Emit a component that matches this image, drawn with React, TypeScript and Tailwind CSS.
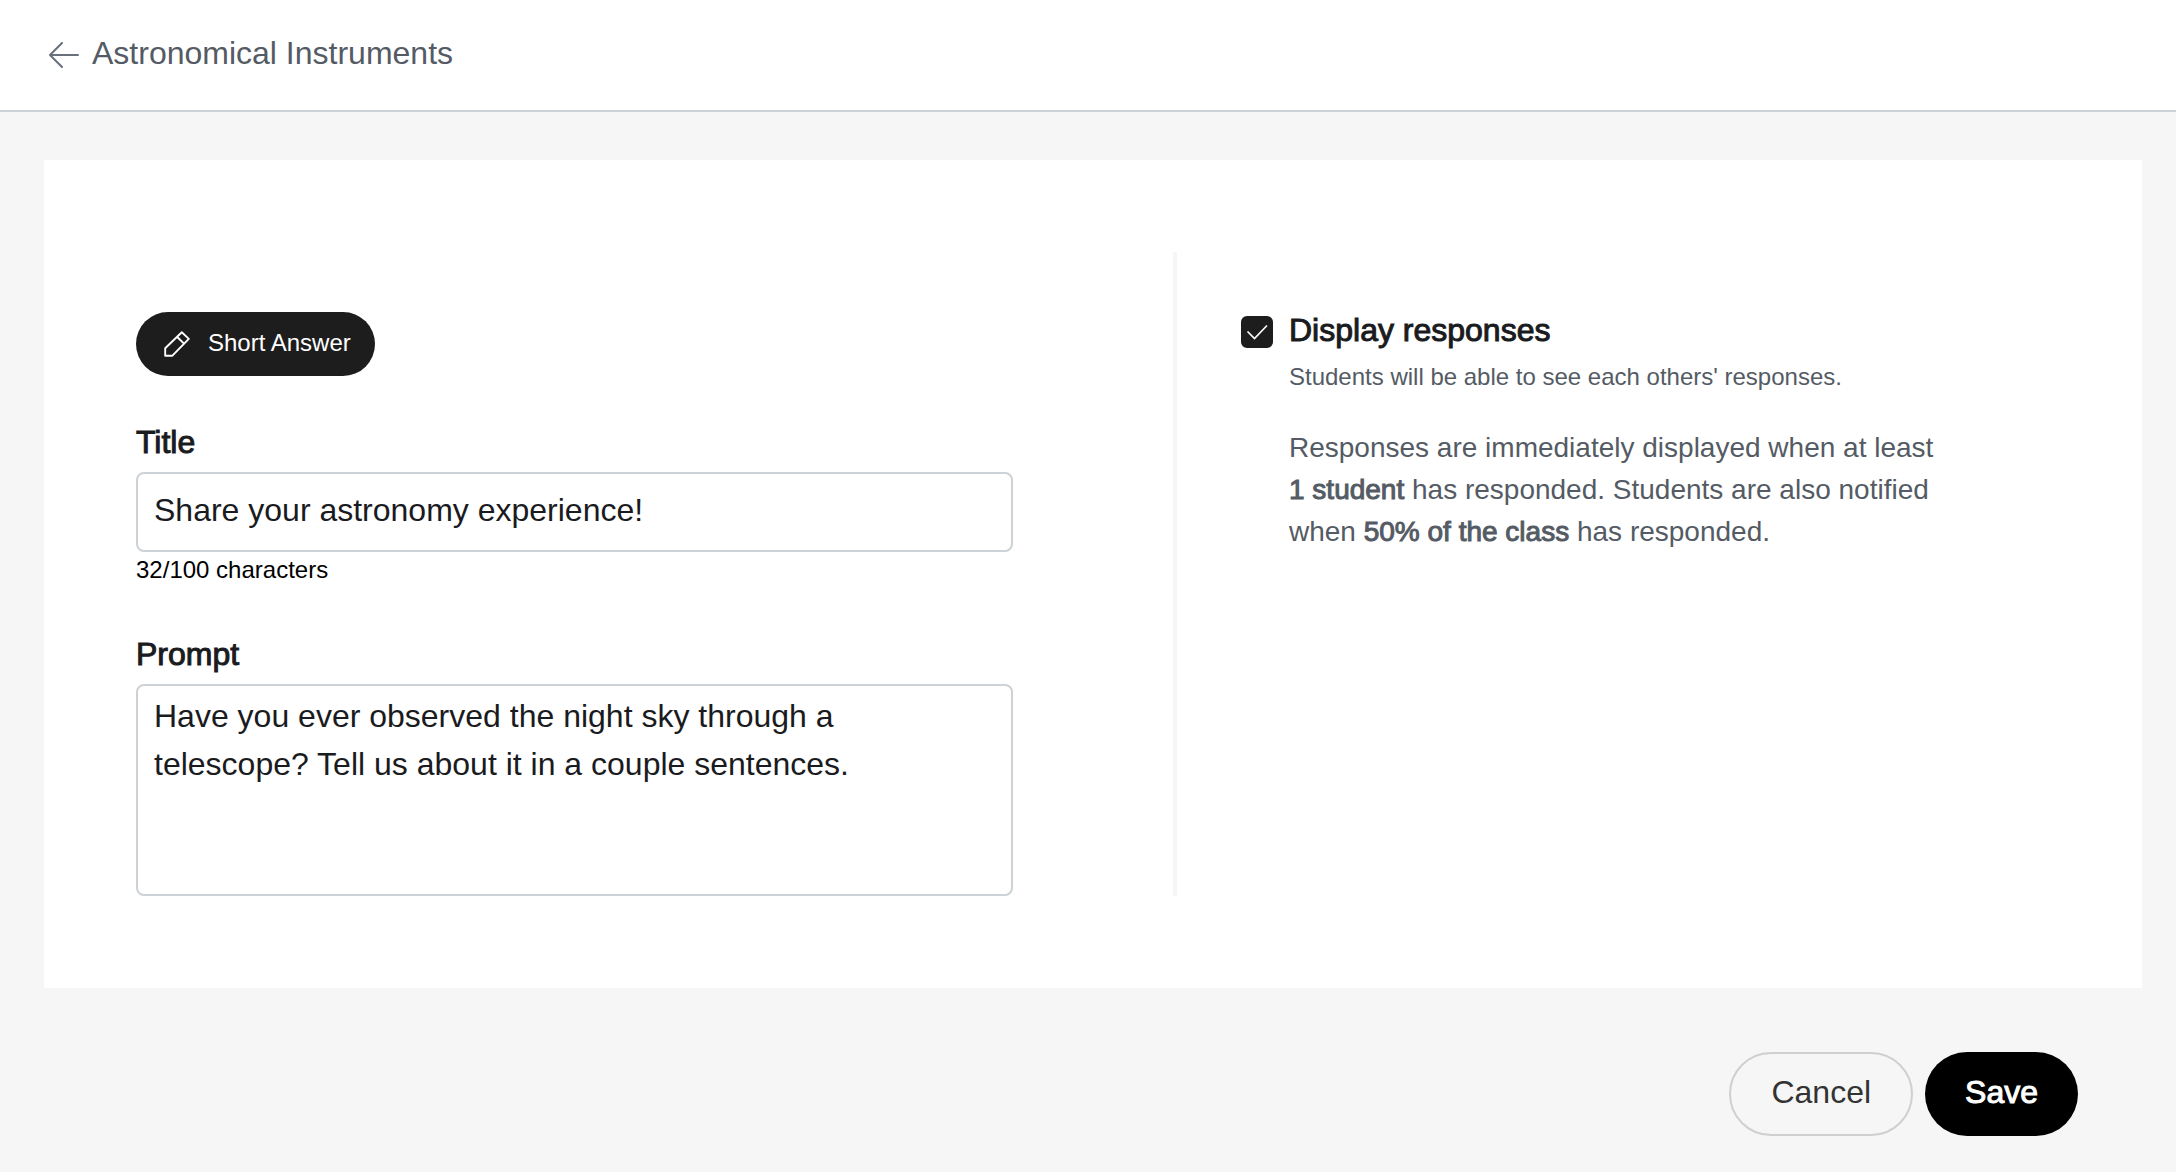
import { useState } from 'react';
import type { ReactNode } from 'react';

const MAX_TITLE_LENGTH = 100;

// Medium weight: sits between the regular and bold faces of the font
function Medium({ children }: { children: ReactNode }) {
  return <strong className="font-normal [-webkit-text-stroke:1px]">{children}</strong>;
}

function ArrowLeftIcon() {
  return (
    <svg width="32" height="26" viewBox="0 0 32 26" fill="none" stroke="#67707c" strokeWidth="2" strokeLinecap="round" strokeLinejoin="round" aria-hidden="true">
      <path d="M14 1 2 13l12 12M2 13h28" />
    </svg>
  );
}

function PencilIcon() {
  return (
    <svg width="26" height="26" viewBox="0 0 26 26" fill="none" stroke="currentColor" strokeWidth="1.9" strokeLinejoin="round" aria-hidden="true">
      <path d="M1.2 17.3 17.8 1.2l7 6.7L8.4 24.7H1.2ZM13 5.8l7 6.8" />
    </svg>
  );
}

export default function App() {
  const [title, setTitle] = useState('Share your astronomy experience!');
  const [prompt, setPrompt] = useState(
    'Have you ever observed the night sky through a telescope? Tell us about it in a couple sentences.'
  );
  const [displayResponses, setDisplayResponses] = useState(true);

  return (
    <div className="min-h-screen bg-[#f6f6f6] text-[#1a1b1e] font-['Liberation_Sans',Arial,sans-serif]">
      <header className="flex h-28 items-center border-b-2 border-[#cdd2d7] bg-white px-12">
        <a href="#" className="flex items-center gap-3 text-[#545b64]">
          <ArrowLeftIcon />
          <h1 className="pb-1 text-[32px] leading-12">Astronomical Instruments</h1>
        </a>
      </header>

      <form onSubmit={(e) => e.preventDefault()}>
        <main className="mt-12 mr-[34px] ml-11 grid grid-cols-[1041fr_873fr] bg-white p-[92px]">
          {/* Question */}
          <section className="border-r-4 border-[#f6f6f6] pt-15 pr-40">
            <div className="inline-flex h-16 items-center gap-[18px] rounded-full bg-[#1d1d1d] pr-6 pl-7 align-top text-white">
              <PencilIcon />
              <span className="pb-0.5 text-2xl">Short Answer</span>
            </div>

            <div className="mt-[42px]">
              <label htmlFor="title" className="mb-1.5 block text-[32px] leading-12">
                <Medium>Title</Medium>
              </label>
              <input
                id="title"
                type="text"
                maxLength={MAX_TITLE_LENGTH}
                value={title}
                onChange={(e) => setTitle(e.target.value)}
                className="block h-20 w-full rounded-lg border-2 border-[#cdd2d7] bg-white px-4 pb-1 text-[32px]"
              />
              <p className="text-2xl leading-9 text-black">
                {title.length}/{MAX_TITLE_LENGTH} characters
              </p>
            </div>

            <div className="mt-[42px]">
              <label htmlFor="prompt" className="mb-1.5 block text-[32px] leading-12">
                <Medium>Prompt</Medium>
              </label>
              <textarea
                id="prompt"
                value={prompt}
                onChange={(e) => setPrompt(e.target.value)}
                className="block h-53 w-full resize-none rounded-lg border-2 border-[#cdd2d7] bg-white px-4 py-1.5 text-[32px] leading-12"
              />
            </div>
          </section>

          {/* Settings */}
          <section className="flex gap-4 pt-[54px] pl-16">
            <span className="mt-2.5 grid size-8 shrink-0">
              <input
                id="display-responses"
                type="checkbox"
                checked={displayResponses}
                onChange={(e) => setDisplayResponses(e.target.checked)}
                className="peer col-start-1 row-start-1 size-8 appearance-none rounded-md border-2 border-[#1d1d1d] checked:bg-[#1d1d1d]"
              />
              <svg viewBox="0 0 32 32" fill="none" stroke="white" strokeWidth="1.7" className="pointer-events-none invisible col-start-1 row-start-1 size-8 peer-checked:visible" aria-hidden="true">
                <path d="m6.5 15.5 7 7L26 9.5" />
              </svg>
            </span>
            <div>
              <label htmlFor="display-responses" className="block text-[32px] leading-12">
                <Medium>Display responses</Medium>
              </label>
              <div className="mt-[5px] text-[#545b64]">
                <p className="text-2xl leading-9">Students will be able to see each others' responses.</p>
                <p className="mt-8 max-w-[656px] text-[28px] leading-[42px]">
                  Responses are immediately displayed when at least <Medium>1 student</Medium> has responded. Students
                  are also notified when <Medium>50% of the class</Medium> has responded.
                </p>
              </div>
            </div>
          </section>
        </main>

        <footer className="flex justify-end gap-3 py-16 pr-[98px]">
          <button type="button" className="h-21 rounded-full border-2 border-[#cfcfcf] px-10 pb-1 text-[32px] text-[#333333]">
            Cancel
          </button>
          <button type="submit" className="h-21 rounded-full bg-black px-10 pb-1 text-[32px] text-white">
            <Medium>Save</Medium>
          </button>
        </footer>
      </form>
    </div>
  );
}
